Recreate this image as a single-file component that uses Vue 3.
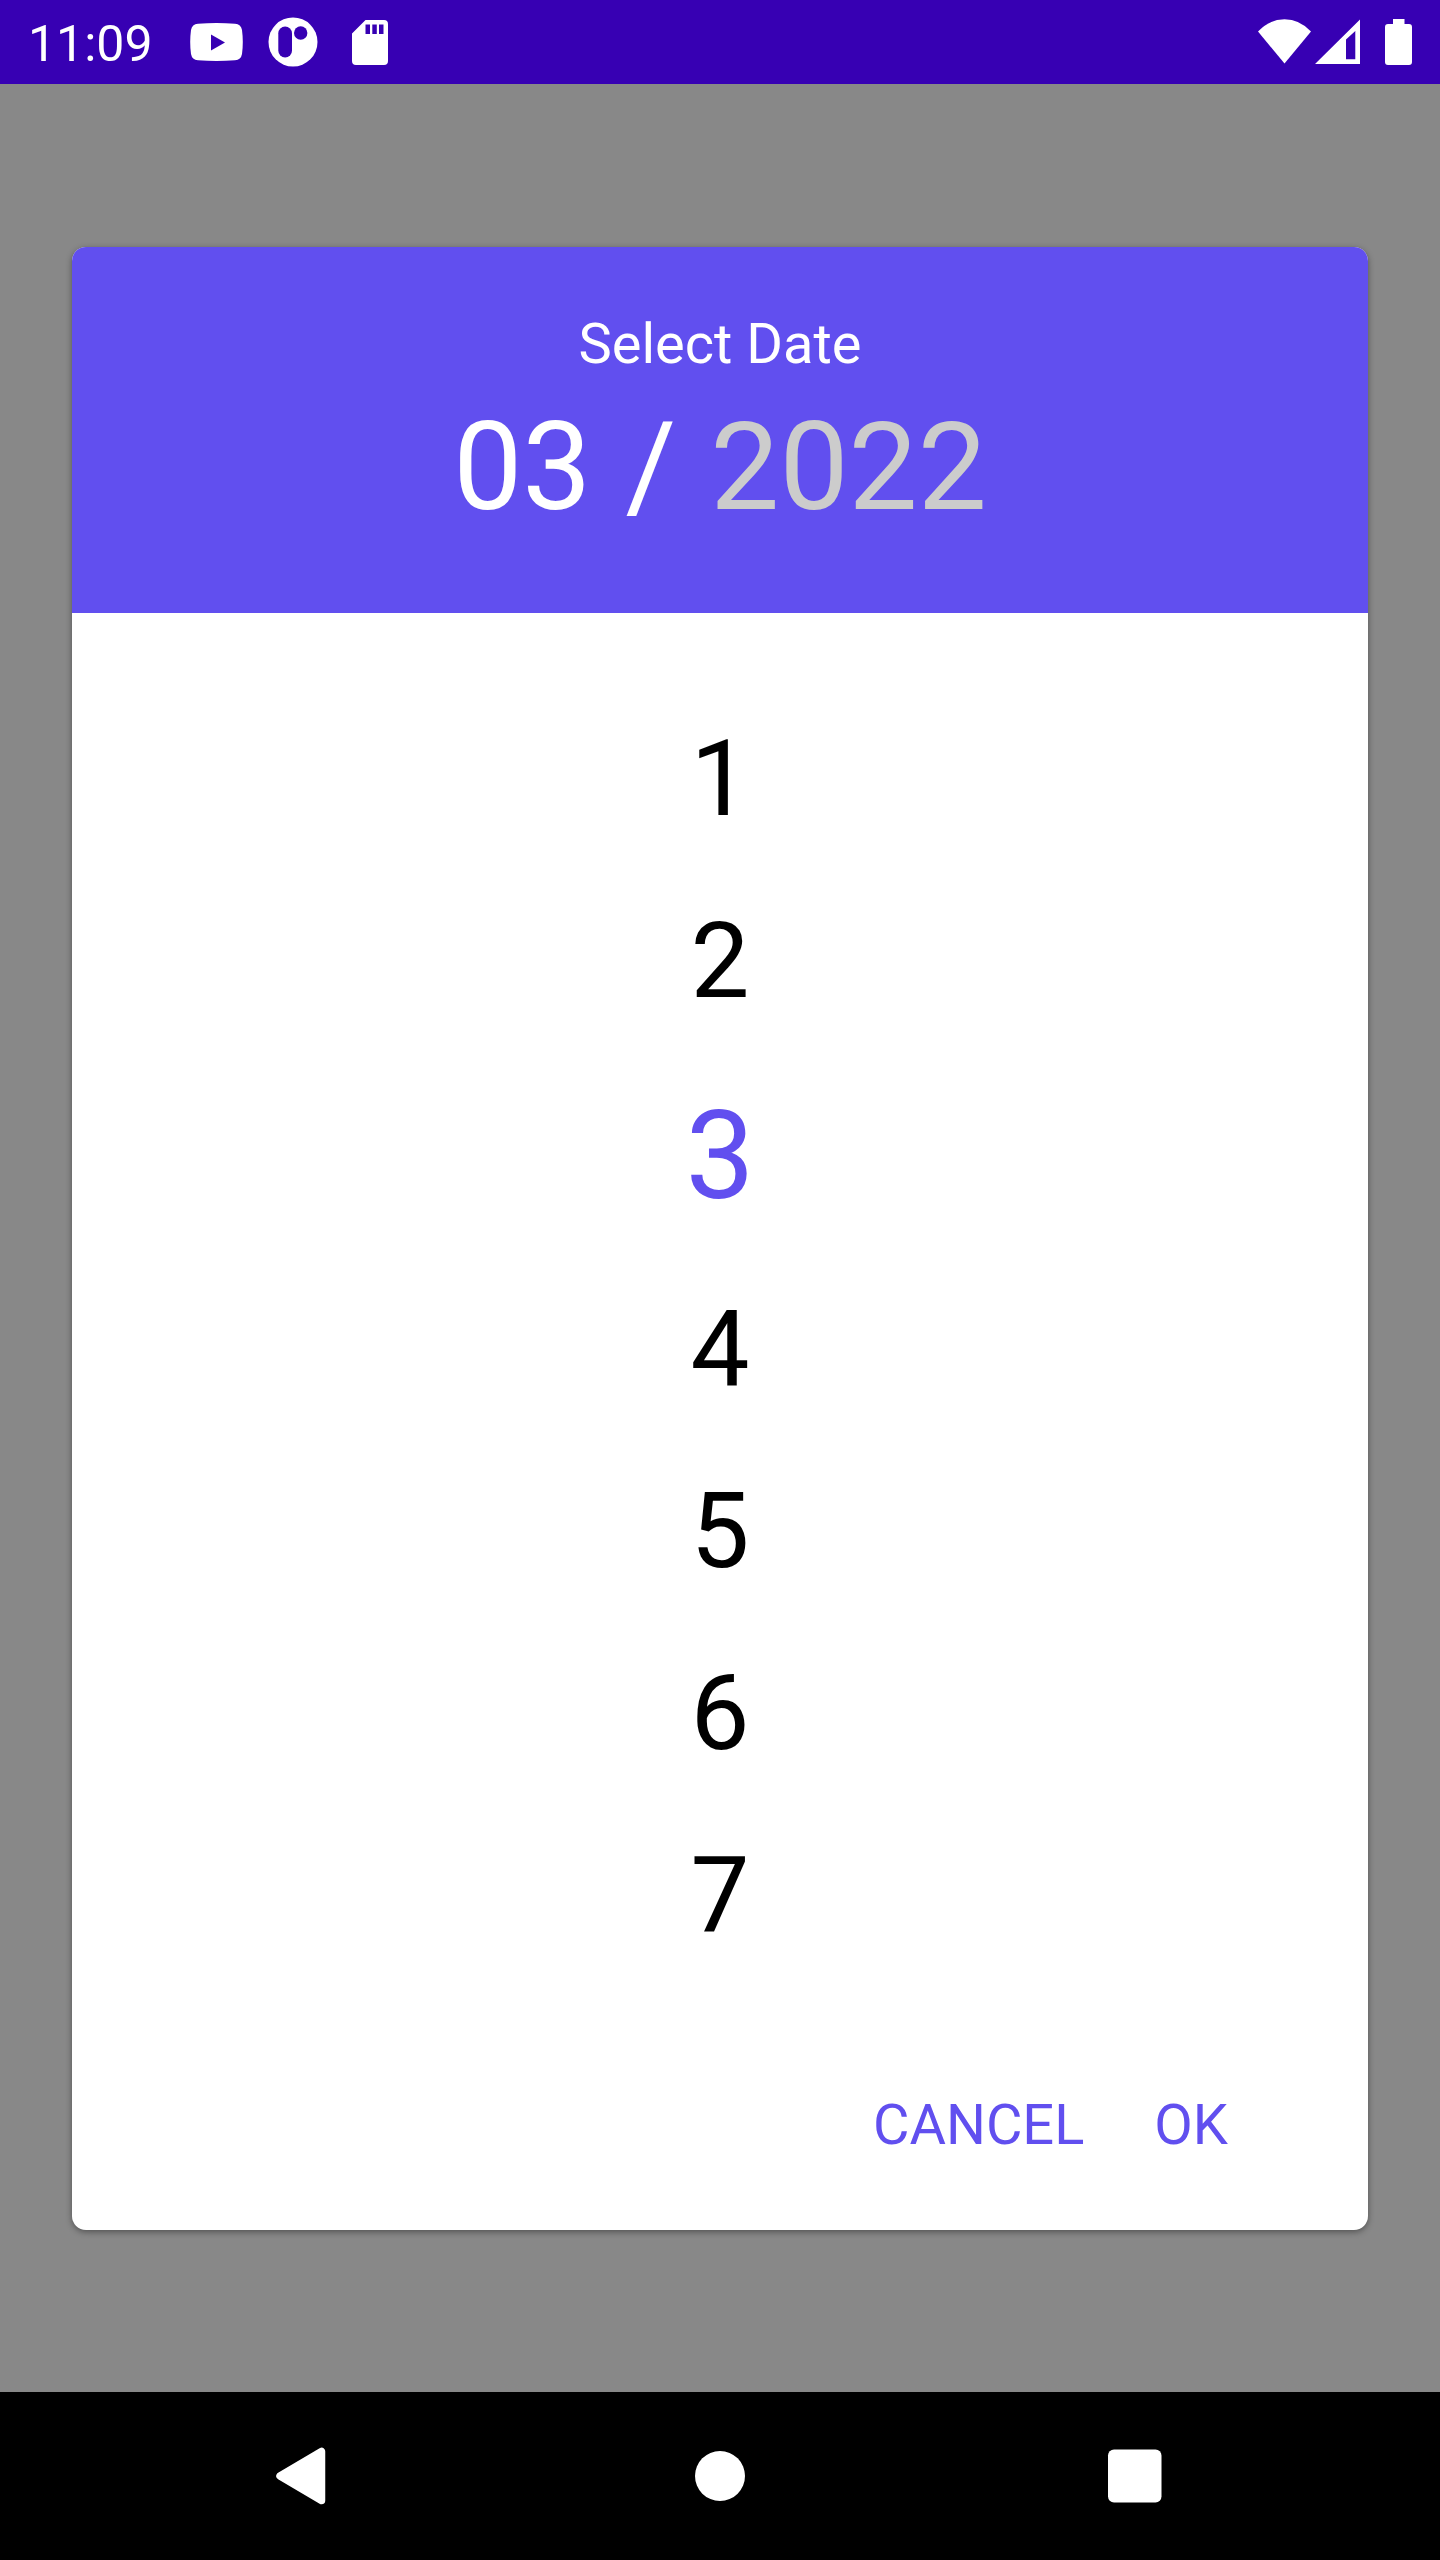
<script setup>
import { computed, ref } from 'vue'

const months = [1, 2, 3, 4, 5, 6, 7]
const month = ref(3)
const year = ref(2022)
const paddedMonth = computed(() => String(month.value).padStart(2, '0'))
</script>

<template>
  <div class="screen">
    <header class="status-bar">
      <time class="clock">11:09</time>
      <svg class="video" width="53" height="38" viewBox="0 0 53 38" aria-hidden="true">
        <path fill="#fff" fill-rule="evenodd" d="M8 .8Q26.500-.6 45 .8Q51 1.200 52 7Q53.600 19 52 31Q51 36.800 45 37.200Q26.500 38.600 8 37.200Q2 36.800 1 31Q-.6 19 1 7Q2 1.200 8 .8ZM21 11.500V27.500L35 19.500Z" />
      </svg>
      <svg class="round-app" width="50" height="50" viewBox="0 0 50 50" aria-hidden="true">
        <circle cx="25" cy="25" r="24.500" fill="#fff" />
        <rect x="10.300" y="9.500" width="13.700" height="31" rx="6.850" fill="#3700b3" />
        <circle cx="32.700" cy="16" r="6.700" fill="#3700b3" />
      </svg>
      <svg class="sd-card" width="36" height="45" viewBox="0 0 36 45" aria-hidden="true">
        <path fill="#fff" fill-rule="evenodd" d="M13.500 0H32Q36 0 36 4V41Q36 45 32 45H4Q0 45 0 41V13.500ZM13.500 4.500V14H18V4.500ZM20.300 4.500V14H24.800V4.500ZM27 4.500V14H31.500V4.500Z" />
      </svg>
      <div class="indicators">
        <svg width="53" height="46" viewBox="0 0 53 46" aria-hidden="true">
          <path fill="#fff" d="M0 12.500Q11.500.3 26.500.3T53 12.500L26.500 44.500Z" />
        </svg>
        <svg width="46" height="46" viewBox="0 0 46 46" aria-hidden="true">
          <path fill="#fff" fill-rule="evenodd" d="M0 45L45 .5V45ZM31 20.500V40.300H40.300V12Z" />
        </svg>
        <svg class="battery" width="27" height="46" viewBox="0 0 27 46" aria-hidden="true">
          <path fill="#fff" d="M8 0H19.500V5H24Q27 5 27 8V43Q27 46 24 46H3Q0 46 0 43V8Q0 5 3 5H8Z" />
        </svg>
      </div>
    </header>

    <main class="backdrop">
      <section class="dialog" role="dialog" aria-labelledby="dialog-title">
        <div class="dialog-header">
          <h1 id="dialog-title">Select Date</h1>
          <div class="date">
            <button type="button">{{ paddedMonth }}</button>
            <span>/</span>
            <button type="button" class="inactive">{{ year }}</button>
          </div>
        </div>
        <ul class="months">
          <li v-for="m in months" :key="m">
            <button type="button" :class="{ selected: m === month }" :aria-pressed="m === month" @click="month = m">{{ m }}</button>
          </li>
        </ul>
        <div class="actions">
          <button type="button">CANCEL</button>
          <button type="button">OK</button>
        </div>
      </section>
    </main>

    <nav class="nav-bar">
      <button type="button" aria-label="Back">
        <svg width="60" height="60" viewBox="0 0 60 60" aria-hidden="true">
          <path d="M5 30L46.500 5.500V54.500Z" fill="#fff" stroke="#fff" stroke-width="7.500" stroke-linejoin="round" />
        </svg>
      </button>
      <button type="button" aria-label="Home">
        <svg width="60" height="60" viewBox="0 0 60 60" aria-hidden="true">
          <circle cx="30" cy="30" r="25" fill="#fff" />
        </svg>
      </button>
      <button type="button" aria-label="Recent apps">
        <svg width="60" height="60" viewBox="0 0 60 60" aria-hidden="true">
          <rect x="3" y="3.500" width="53.500" height="53" rx="6" fill="#fff" />
        </svg>
      </button>
    </nav>
  </div>
</template>

<style>
body {
  margin: 0;
}
</style>

<style scoped>
.screen {
  display: flex;
  flex-direction: column;
  min-height: 100vh;
  font-family: Roboto, sans-serif;
  background: #888;
}

svg {
  display: block;
  flex: none;
}

button {
  margin: 0;
  padding: 0;
  border: 0;
  background: none;
  color: inherit;
  font: inherit;
  cursor: pointer;
}

.status-bar {
  display: flex;
  align-items: center;
  box-sizing: border-box;
  height: 84px;
  padding: 0 28px;
  background: #3700b3;
  color: #fff;
}

.clock {
  padding-top: 3px;
  font-size: 50px;
  line-height: 58px;
}

.video {
  margin-left: 37px;
}

.round-app {
  margin-left: 25px;
}

.sd-card {
  margin-left: 34px;
}

.indicators {
  display: flex;
  gap: 4px;
  margin-left: auto;
}

.battery {
  margin-left: 20px;
}

.backdrop {
  display: flex;
  flex: 1;
  align-items: center;
  padding: 0 72px;
}

.dialog {
  flex: 1;
  overflow: hidden;
  border-radius: 14px;
  background: #fff;
  box-shadow: 0 2px 6px rgba(0, 0, 0, 0.4);
}

.dialog-header {
  padding: 64px 0 74px;
  background: #614fef;
  color: #fff;
  text-align: center;
}

h1 {
  margin: 0 0 18px;
  font-size: 56px;
  font-weight: 400;
  line-height: 66px;
}

.date {
  display: flex;
  justify-content: center;
  gap: 34px;
  font-size: 123px;
  line-height: 144px;
}

.inactive {
  color: #ccc;
}

.months {
  margin: 0;
  padding: 76px 0 105px;
  list-style: none;
}

.months button {
  display: block;
  width: 100%;
  color: #000;
  font-size: 105px;
  line-height: 182px;
}

.months .selected {
  color: #614fef;
  font-size: 123px;
  line-height: 206px;
}

.actions {
  display: flex;
  justify-content: flex-end;
  gap: 70px;
  padding: 0 140px 72px 0;
  color: #614fef;
  font-size: 56px;
  line-height: 66px;
}

.nav-bar {
  display: grid;
  grid-template-columns: repeat(3, 1fr);
  height: 168px;
  padding: 0 97px;
  background: #000;
}

.nav-bar button {
  display: flex;
  align-items: center;
  justify-content: center;
}
</style>
